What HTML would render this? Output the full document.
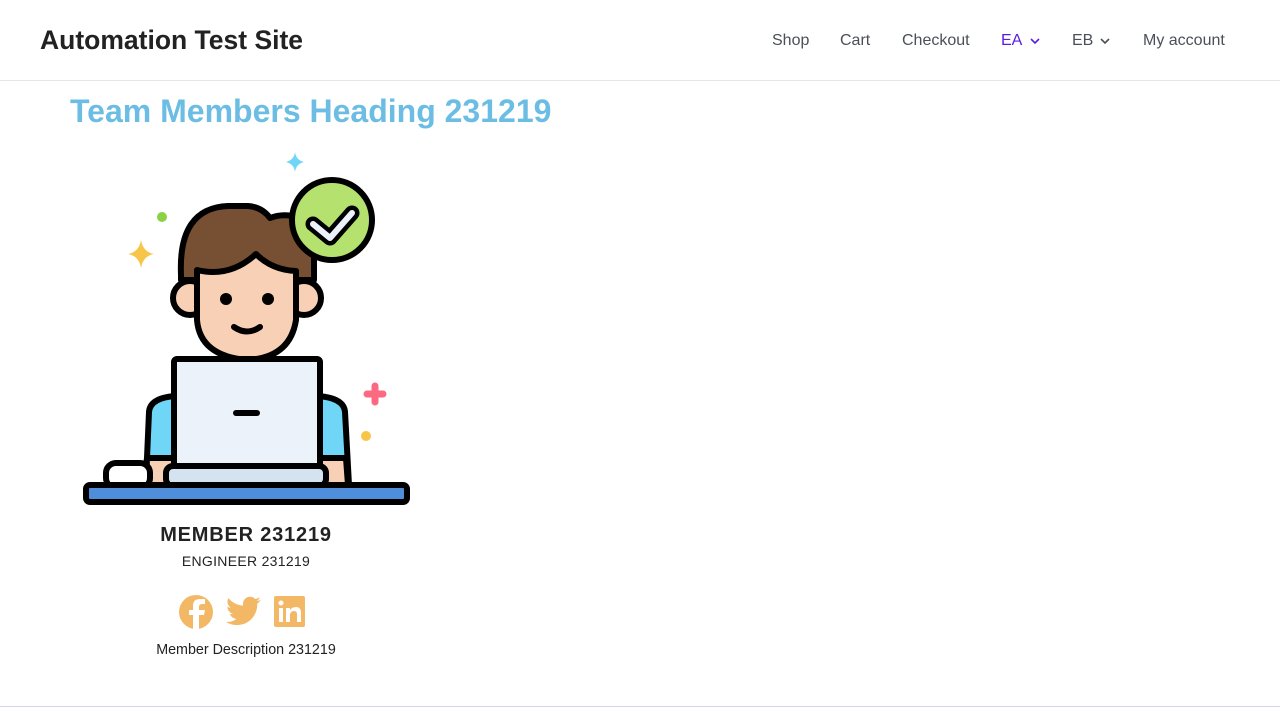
<!DOCTYPE html>
<html><head><meta charset="utf-8"><style>
*{margin:0;padding:0;box-sizing:border-box}
body{width:1280px;height:720px;background:#fff;position:relative;overflow:hidden;font-family:"Liberation Sans",sans-serif}
.hdr{position:absolute;left:0;top:0;width:1280px;height:81px;border-bottom:1px solid #e6e6e6}
.logo{position:absolute;left:40px;top:25px;font-size:26.5px;font-weight:bold;color:#222}
.nav{position:absolute;top:32px;font-size:16px;color:#4b4f58}
h1{position:absolute;left:70px;top:93px;font-family:"Liberation Sans",Arial,sans-serif;font-size:32px;font-weight:bold;color:#6bbde3}
.c{position:absolute;left:86px;width:320px;text-align:center;color:#222}
.bot{position:absolute;left:0;top:706px;width:1280px;height:1px;background:#ddd0f5}
svg.art{position:absolute;left:0;top:0}
</style></head><body>
<div class="hdr"></div>
<div class="logo">Automation Test Site</div>
<div class="nav" style="left:772px">Shop</div>
<div class="nav" style="left:840px">Cart</div>
<div class="nav" style="left:902px">Checkout</div>
<div class="nav" style="left:1001px;color:#5a1ee0">EA</div>
<div class="nav" style="left:1072px">EB</div>
<div class="nav" style="left:1143px">My account</div>
<svg class="art" width="1280" height="720" fill="none">
<path d="M1031 39l4 4 4-4" stroke="#5a1ee0" stroke-width="1.6"/>
<path d="M1101 39l4 4 4-4" stroke="#4b4f58" stroke-width="1.6"/>
<g stroke="#000" stroke-width="6" stroke-linejoin="round" stroke-linecap="round">
<path d="M147 458 L149 412 Q150 398 175 396 L318 396 Q344 398 345 412 L349 485 L144 485Z" fill="#6fd6f8"/>
<path d="M147 458 H346 L348 485 H146Z" fill="#f8d0b5"/>
<path d="M181 275 Q178 208 228 206 L248 206 Q262 207 270 218 Q290 210 314 225 L314 280 L181 280Z" fill="#774f33"/>
<circle cx="190" cy="298" r="17" fill="#f8d0b5"/><circle cx="304" cy="298" r="17" fill="#f8d0b5"/>
<path d="M197 270 Q230 278 256 254 Q272 270 296 271 L296 320 Q290 358 247 360 Q200 356 197 320Z" fill="#f8d0b5"/>
<path d="M234 327 Q247 336 260 327"/>
<rect x="174" y="359" width="146" height="108" rx="3" fill="#ebf2fa"/>
<path d="M236 413H257"/>
<rect x="106" y="463" width="44" height="25" rx="10" fill="#fff"/>
<rect x="166" y="466" width="160" height="20" rx="7" fill="#d5e2f0"/>
<rect x="86" y="485" width="321" height="17" rx="4" fill="#4f8edb"/>
<circle cx="332" cy="220" r="40" fill="#b5e26f"/>
<path d="M313 224l17 14 22-25" stroke-width="15"/>
</g>
<path d="M313 224l17 14 22-25" stroke="#ebf2fa" stroke-width="6" stroke-linecap="round" stroke-linejoin="round"/>
<circle cx="226" cy="299" r="6" fill="#000"/><circle cx="268" cy="299" r="6" fill="#000"/>
<circle cx="162" cy="217" r="5" fill="#8bd146"/>
<circle cx="366" cy="436" r="5" fill="#f7c548"/>
<path d="M141 240 Q143 252 154 254 Q143 256 141 268 Q139 256 128 254 Q139 252 141 240Z" fill="#f7c548"/>
<path d="M295 152 Q296 160 304 162 Q296 164 295 172 Q294 164 286 162 Q294 160 295 152Z" fill="#6fd6f8"/>
<path d="M375 386V402M367 394H383" stroke="#fb6a80" stroke-width="7" stroke-linecap="round"/>
<circle cx="196" cy="612" r="17" fill="#f2b866"/>
<path d="M199 630V615h5l1-5h-6v-3q0-3 3-3h3v-5h-5q-7 0-7 7v4h-4v5h4v15Z" fill="#fff"/>
<path transform="translate(226 593.5) scale(0.068)" fill="#f2b866" d="M459.37 151.716c.325 4.548.325 9.097.325 13.645 0 138.72-105.583 298.558-298.558 298.558-59.452 0-114.68-17.219-161.137-47.106 8.447.974 16.568 1.299 25.34 1.299 49.055 0 94.213-16.568 130.274-44.832-46.132-.975-84.792-31.188-98.112-72.772 6.498.974 12.995 1.624 19.818 1.624 9.421 0 18.843-1.3 27.614-3.573-48.081-9.747-84.143-51.98-84.143-102.985v-1.299c13.969 7.797 30.214 12.67 47.431 13.319-28.264-18.843-46.781-51.005-46.781-87.391 0-19.492 5.197-37.360 14.294-52.954 51.655 63.675 129.300 105.258 216.365 109.807-1.624-7.797-2.599-15.918-2.599-24.040 0-57.828 46.782-104.934 104.934-104.934 30.213 0 57.502 12.670 76.670 33.137 23.715-4.548 46.456-13.320 66.599-25.340-7.798 23.391-23.715 42.609-44.832 55.279 20.443-2.599 40.186-9.097 58.703-17.219-13.319 19.492-29.237 37.360-46.781 50.080z"/>
<rect x="274" y="596" width="31" height="31" rx="2" fill="#f2b866"/>
<rect x="279" y="608" width="4" height="14" fill="#fff"/><circle cx="281" cy="603" r="2.5" fill="#fff"/>
<path d="M286 608h4v2q2-3 6-3 5 0 5 6v9h-4v-8q0-3-3-3t-4 3v8h-4Z" fill="#fff"/>
</svg>
<h1>Team Members Heading 231219</h1>
<div class="c" style="top:524px;font-size:20px;font-weight:bold;letter-spacing:.8px">MEMBER 231219</div>
<div class="c" style="top:553px;font-size:14px;letter-spacing:.3px">ENGINEER 231219</div>
<div class="c" style="top:642px;font-size:14.3px">Member Description 231219</div>
<div class="bot"></div>
</body></html>
